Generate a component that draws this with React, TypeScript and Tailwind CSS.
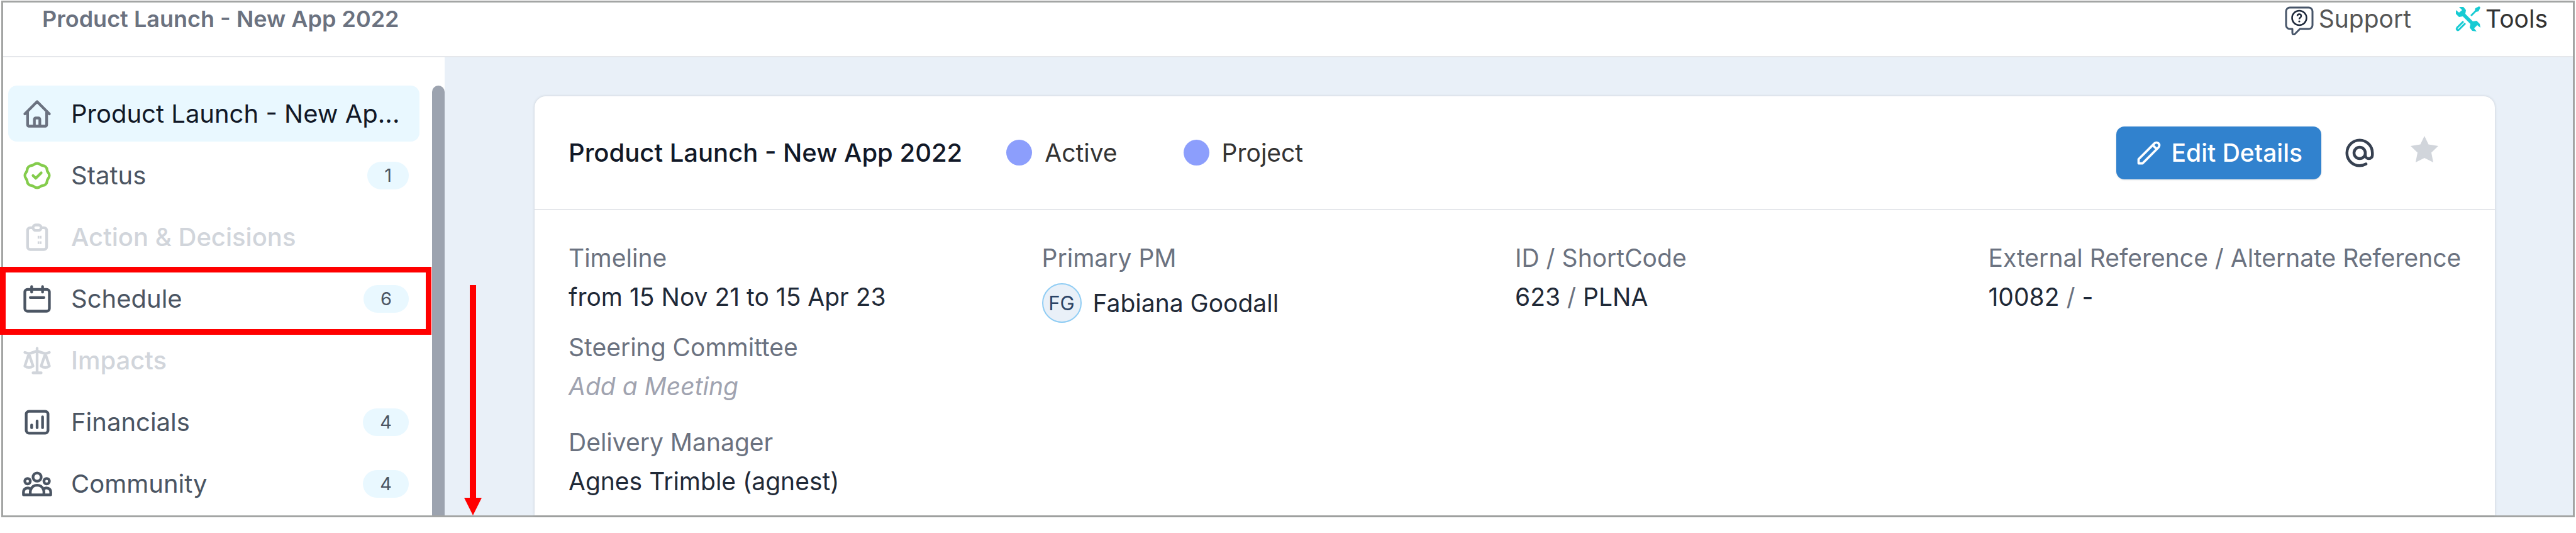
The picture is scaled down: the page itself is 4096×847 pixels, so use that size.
import React from 'react';

type IconProps = {
  className?: string;
  children: React.ReactNode;
};

function Icon({ className = 'size-[52px]', children }: IconProps) {
  return (
    <svg
      viewBox="0 0 24 24"
      fill="none"
      stroke="currentColor"
      strokeWidth={2}
      strokeLinecap="round"
      strokeLinejoin="round"
      className={`shrink-0 ${className}`}
      aria-hidden="true"
    >
      {children}
    </svg>
  );
}

const navItems = [
  {
    label: 'Product Launch - New Ap...',
    text: 'text-[#111827]',
    iconColor: 'text-[#6b7280]',
    active: true,
    icon: (
      <path d="M3 12l2-2m0 0l7-7 7 7M5 10v10a1 1 0 001 1h3m10-11l2 2m-2-2v10a1 1 0 01-1 1h-3m-6 0a1 1 0 001-1v-4a1 1 0 011-1h2a1 1 0 011 1v4a1 1 0 001 1m-6 0h6" />
    ),
  },
  {
    label: 'Status',
    count: 1,
    text: 'text-[#4b5563]',
    iconColor: 'text-[#84cc4c]',
    icon: (
      <path d="M9 12l2 2 4-4M7.835 4.697a3.42 3.42 0 001.946-.806 3.42 3.42 0 014.438 0 3.42 3.42 0 001.946.806 3.42 3.42 0 013.138 3.138 3.42 3.42 0 00.806 1.946 3.42 3.42 0 010 4.438 3.42 3.42 0 00-.806 1.946 3.42 3.42 0 01-3.138 3.138 3.42 3.42 0 00-1.946.806 3.42 3.42 0 01-4.438 0 3.42 3.42 0 00-1.946-.806 3.42 3.42 0 01-3.138-3.138 3.42 3.42 0 00-.806-1.946 3.42 3.42 0 010-4.438 3.42 3.42 0 00.806-1.946 3.42 3.42 0 013.138-3.138z" />
    ),
  },
  {
    label: 'Action & Decisions',
    text: 'font-medium text-[#d1d5db]',
    iconColor: 'text-[#d1d5db]',
    icon: (
      <>
        <path d="M9 5H7a2 2 0 00-2 2v12a2 2 0 002 2h10a2 2 0 002-2V7a2 2 0 00-2-2h-2M9 5a2 2 0 002 2h2a2 2 0 002-2M9 5a2 2 0 012-2h2a2 2 0 012 2" />
        <path d="M12.400 12h1.200M14 12h1.200M12.400 16h1.200M14 16h1.200" strokeLinecap="butt" />
      </>
    ),
  },
  {
    label: 'Schedule',
    count: 6,
    text: 'text-[#4b5563]',
    iconColor: 'text-[#4b5563]',
    icon: (
      <path d="M8 7V3m8 4V3m-9 8h10M5 21h14a2 2 0 002-2V7a2 2 0 00-2-2H5a2 2 0 00-2 2v12a2 2 0 002 2z" />
    ),
  },
  {
    label: 'Impacts',
    text: 'font-medium text-[#d1d5db]',
    iconColor: 'text-[#d1d5db]',
    icon: (
      <path d="M3 6l3 1m0 0l-3 9a5.002 5.002 0 006.001 0M6 7l3 9M6 7l6-2m6 2l3-1m-3 1l-3 9a5.002 5.002 0 006.001 0M18 7l3 9m-3-9l-6-2m0-2v2m0 16V5m0 16H9m3 0h3" />
    ),
  },
  {
    label: 'Financials',
    count: 4,
    text: 'text-[#4b5563]',
    iconColor: 'text-[#4b5563]',
    icon: (
      <path d="M16 8v8m-4-5v5m-4-2v2m-2 4h12a2 2 0 002-2V6a2 2 0 00-2-2H6a2 2 0 00-2 2v12a2 2 0 002 2z" />
    ),
  },
  {
    label: 'Community',
    count: 4,
    text: 'text-[#4b5563]',
    iconColor: 'text-[#4b5563]',
    icon: (
      <path d="M17 20h5v-2a3 3 0 00-5.356-1.857M17 20H7m10 0v-2c0-.656-.126-1.283-.356-1.857M7 20H2v-2a3 3 0 015.356-1.857M7 20v-2c0-.656.126-1.283.356-1.857m0 0a5.002 5.002 0 019.288 0M15 7a3 3 0 11-6 0 3 3 0 016 0zm6 3a2 2 0 11-4 0 2 2 0 014 0zM7 10a2 2 0 11-4 0 2 2 0 014 0z" />
    ),
  },
];

function Header() {
  return (
    <header className="flex h-[87px] shrink-0 justify-between border-b-2 border-[#e5e7eb] bg-white pr-10 pl-[62px]">
      <h1 className="pt-[2px] text-[36px] leading-[48px] font-semibold text-[#6b7280]">
        Product Launch - New App 2022
      </h1>
      <nav className="flex gap-[70px] text-[39px] leading-[48px]">
        <a href="#support" className="flex gap-2 pt-[2px] text-[#555555]">
          <svg viewBox="0 0 46 46" fill="none" className="mt-1 size-[46px] text-[#475569]" aria-hidden="true">
            <path
              d="M8 2h30a6 6 0 016 6v22a6 6 0 01-6 6H24l-8 8c-2 2-4 1-4-2v-6H8a6 6 0 01-6-6V8a6 6 0 016-6z"
              stroke="currentColor"
              strokeWidth="3"
              strokeLinejoin="round"
            />
            <circle cx="23" cy="18.500" r="11.500" stroke="#1e293b" strokeWidth="2.500" />
            <path d="M20 15.500c0-4 6-4 6 0 0 2.500-3 2.500-3 5" stroke="#1e293b" strokeWidth="2.500" />
            <circle cx="23" cy="24" r="1.600" fill="#1e293b" />
          </svg>
          Support
        </a>
        <a href="#tools" className="flex gap-2 pt-[2px] text-[#333333]">
          <svg viewBox="0 0 40 40" className="mt-1 size-10" fill="#17cbd3" aria-hidden="true">
            <path d="M6 1l7 0 4 5-1 6 12 12 6-1 5 5 1 6-5-4-5 5 4 5-7-1-4-5 1-6L12 16l-6 1-5-5 0-6 5 4 5-4z" />
            <path d="M24 14l7-7 1-4 6-3 2 2-3 6-4 1-7 7z" />
            <path d="M13 24L3 34c-2 3 1 5 3 3l10-10" fill="none" stroke="#17cbd3" strokeWidth="3" />
          </svg>
          Tools
        </a>
      </nav>
    </header>
  );
}

function Sidebar() {
  return (
    <aside className="flex w-[702px] shrink-0 justify-between bg-white pt-[45px] pl-2">
      <ul className="flex w-[654px] flex-col gap-[9px]">
        {navItems.map((item) => (
          <li key={item.label}>
            <a
              href="#"
              className={`relative flex h-[89px] items-center gap-7 rounded-[14px] pr-[17px] pl-5 text-[40px] leading-[52px] ${item.text} ${item.active ? 'bg-[#e9f8ff]' : ''}`}
            >
              <Icon className={`size-[52px] ${item.iconColor}`}>{item.icon}</Icon>
              <span className="grow whitespace-nowrap">{item.label}</span>
              {item.count && (
                <span className="rounded-full bg-[#e9f8ff] px-[27px] text-[29px] leading-[44px]">
                  {item.count}
                </span>
              )}
              {item.label === 'Schedule' && (
                <span className="absolute -top-[6px] -left-[13px] h-[108px] w-[686px] border-[9px] border-[#ff0000]" />
              )}
            </a>
          </li>
        ))}
      </ul>
      <div className="w-5 rounded-t-full bg-[#9ca3af]" />
    </aside>
  );
}

function Field({ label, children }: { label: string; children: React.ReactNode }) {
  return (
    <div>
      <dt className="whitespace-nowrap text-[#6b7280]">{label}</dt>
      <dd className="text-[#1f2937]">{children}</dd>
    </div>
  );
}

function Tag({ label }: { label: string }) {
  return (
    <span className="flex items-center gap-5 text-[39px] leading-[48px] text-[#333333]">
      <span className="size-[41px] rounded-full bg-[#8c9efc]" />
      {label}
    </span>
  );
}

function ProjectCard() {
  return (
    <section className="grow rounded-t-[18px] bg-white shadow-[0_0_4px_rgba(0,0,0,0.15)]">
      <div className="flex h-[181px] items-center justify-between border-b-2 border-[#e5e7eb] pr-[90px] pl-[54px]">
        <div className="flex items-center">
          <h2 className="mr-[70px] text-[40px] leading-[52px] font-medium text-[#111827]">
            Product Launch - New App 2022
          </h2>
          <div className="flex gap-[105px]">
            <Tag label="Active" />
            <Tag label="Project" />
          </div>
        </div>
        <div className="flex items-center">
          <button className="flex h-[84px] items-center gap-[14px] rounded-[13px] bg-[#3182ce] px-[30px] text-[39px] leading-[48px] font-medium text-white shadow-sm">
            <Icon className="size-[44px]">
              <path d="M15.232 5.232l3.536 3.536m-2.036-5.036a2.500 2.500 0 113.536 3.536L6.500 21.036H3v-3.572L16.732 3.732z" />
            </Icon>
            Edit Details
          </button>
          <button aria-label="Mention" className="ml-[34px] text-[#374151]">
            <Icon className="size-[54px]">
              <path d="M16 12a4 4 0 10-8 0 4 4 0 008 0zm0 0v1.500a2.500 2.500 0 005 0V12a9 9 0 10-9 9m4.500-1.206a8.959 8.959 0 01-4.500 1.207" />
            </Icon>
          </button>
          <button aria-label="Add to favourites" className="mb-3 ml-[54px] text-[#d1d5db]">
            <svg viewBox="0 0 44 42" className="h-[42px] w-11" fill="currentColor" aria-hidden="true">
              <path d="M22 0l6.500 13.500L44 16 33 26.500 36 42 22 35 8 42l3-15.500L0 16l15.500-2.500z" />
            </svg>
          </button>
        </div>
      </div>
      <dl className="grid grid-cols-4 pt-[45px] pr-[53px] pl-[54px] text-[39px] leading-[62px]">
        <div className="flex flex-col">
          <Field label="Timeline">from 15 Nov 21 to 15 Apr 23</Field>
          <div className="mt-[18px]">
            <Field label="Steering Committee">
              <span className="text-[#a0a3b0] italic">Add a Meeting</span>
            </Field>
          </div>
          <div className="mt-[27px]">
            <Field label="Delivery Manager">Agnes Trimble (agnest)</Field>
          </div>
        </div>
        <Field label="Primary PM">
          <span className="flex items-center gap-[18px] pt-[9px]">
            <span className="flex size-[63px] items-center justify-center rounded-full border-2 border-[#90cdf4] bg-[#e9f0f8] text-[31px] text-[#2a4365]">
              FG
            </span>
            Fabiana Goodall
          </span>
        </Field>
        <Field label="ID / ShortCode">
          623 <span className="text-[#6b7280]">/</span> PLNA
        </Field>
        <Field label="External Reference / Alternate Reference">
          10082 <span className="text-[#6b7280]">/</span> -
        </Field>
      </dl>
    </section>
  );
}

export default function App() {
  return (
    <div className="flex h-screen flex-col overflow-hidden bg-white pt-px pr-[2px] pb-[25px] pl-[2px] font-['Inter',sans-serif]">
      <div className="relative flex min-h-0 grow flex-col border-[3px] border-[#a3a5a4]">
        <Header />
        <div className="flex min-h-0 grow">
          <Sidebar />
          <main className="flex grow bg-[#e9f0f8] pt-[62px] pr-[124px] pl-[143px]">
            <ProjectCard />
          </main>
        </div>
        {/* scroll direction arrow */}
        <svg
          viewBox="0 0 28 366"
          className="absolute bottom-0 left-[733px] h-[366px] w-7"
          fill="#ff0000"
          aria-hidden="true"
        >
          <path d="M9 0h10v338h9l-14 28-14-28h9z" />
        </svg>
      </div>
    </div>
  );
}
